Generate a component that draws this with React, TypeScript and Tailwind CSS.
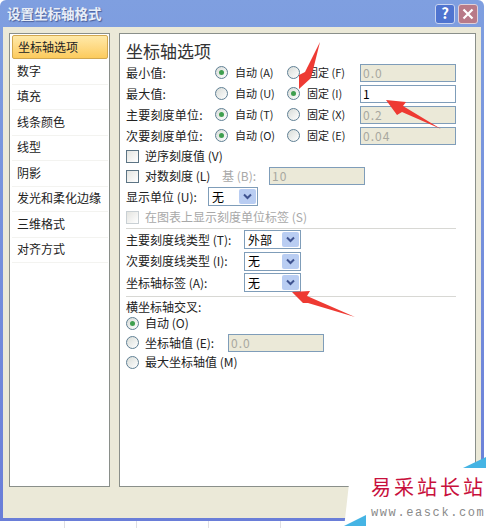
const cjk = "font-['Noto_Sans_CJK_SC','Noto_Sans',sans-serif]";

const navItems = ["数字", "填充", "线条颜色", "线型", "阴影", "发光和柔化边缘", "三维格式", "对齐方式"];

function Radio({ checked }: { checked?: boolean }) {
  return (
    <span className="flex h-[13px] w-[13px] shrink-0 items-center justify-center rounded-full border border-[#5f7f94] bg-gradient-to-br from-[#d8dcd8] to-white">
      {checked && <span className="h-[5px] w-[5px] rounded-full bg-[#3f9f4f]" />}
    </span>
  );
}

function Check({ muted }: { muted?: boolean }) {
  return (
    <span className={`h-[13px] w-[13px] shrink-0 border bg-gradient-to-br from-[#e4e4e0] to-white ${muted ? "border-[#c9d0d4]" : "border-[#5c7484]"}`} />
  );
}

function Field({ value, off, className }: { value: string; off?: boolean; className: string }) {
  return (
    <span
      className={`flex items-center border border-[#7f9db9] pl-[2px] text-[12px] tracking-[1px] ${off ? "bg-[#ebe9d8] text-[#a8a8a0]" : "bg-white text-black"} ${className}`}
    >
      {value}
    </span>
  );
}

function Select({ value, className }: { value: string; className: string }) {
  return (
    <span className={`flex h-[19px] items-center justify-between border border-[#7f9db9] bg-white pl-[3px] pr-[1px] text-[12px] text-black ${className}`}>
      {value}
      <span className="flex h-[15px] w-[17px] items-center justify-center rounded-[2px] bg-[#b9cdf2]">
        <svg width="9" height="7" viewBox="0 0 9 7">
          <path d="M1 1.5 4.5 5 8 1.5" fill="none" stroke="#3f5390" strokeWidth="2" />
        </svg>
      </span>
    </span>
  );
}

function AxisRow({ label, auto, fixed, autoOn, value, off }: { label: string; auto: string; fixed: string; autoOn: boolean; value: string; off: boolean }) {
  return (
    <div className="flex h-[21px] items-center">
      <span className="w-[89px] tracking-[0.2px]">{label}</span>
      <Radio checked={autoOn} />
      <span className="ml-[7px] w-[52px] whitespace-nowrap text-[11px]">{auto}</span>
      <Radio checked={!autoOn} />
      <span className="ml-[7px] w-[53px] whitespace-nowrap text-[11px]">{fixed}</span>
      <Field value={value} off={off} className="h-[18px] w-[96px]" />
    </div>
  );
}

function SelectRow({ label, value }: { label: string; value: string }) {
  return (
    <div className="flex h-[21.5px] items-center">
      <span className="w-[118px] whitespace-nowrap">{label}</span>
      <Select value={value} className="w-[57px]" />
    </div>
  );
}

export default function App() {
  return (
    <div className={`relative h-[528px] w-[486px] overflow-hidden bg-white text-[12px] text-[#222] ${cjk}`}>
      <div className="flex h-[521px] w-[484px] flex-col rounded-t-[6px] bg-gradient-to-b from-[#7f9fe0] to-[#6a7ed8] px-[3px] pb-[3px]">
        {/* 标题栏 */}
        <div className="flex h-[27px] shrink-0 items-center justify-between pl-[4px] pr-[3px]">
          <span className="text-[13.5px] font-bold text-[#e8eef8] [text-shadow:1px_1px_1px_#4a5f9a]">设置坐标轴格式</span>
          <div className="flex gap-[3px]">
            <span className="flex h-[20px] w-[20px] items-center justify-center rounded-[3px] border border-[#c8d4f0] bg-[#4f74d0] text-[15px] font-bold text-white">?</span>
            <span className="flex h-[20px] w-[20px] items-center justify-center rounded-[3px] border border-[#e0d0d8] bg-[#b87a88]">
              <svg width="12" height="12" viewBox="0 0 12 12">
                <path d="M1.5 1.5 10.5 10.5M10.5 1.5 1.5 10.5" stroke="white" strokeWidth="2.2" />
              </svg>
            </span>
          </div>
        </div>

        <div className="flex flex-1 gap-[9px] bg-[#ebe9d8] pb-[31px] pl-[6px] pr-[5px] pt-[6px]">
          {/* 左侧导航 */}
          <div className="w-[101px] shrink-0 border border-[#8a8f8a] bg-white pl-[2px] pr-[1px] pt-[1px]">
            <div className="flex h-[24px] items-center rounded-[2px] border border-[#d2a850] bg-gradient-to-b from-[#ffe9a8] to-[#fccb5c] pl-[5px]">坐标轴选项</div>
            {navItems.map((item) => (
              <div key={item} className="flex h-[25.5px] items-center border-b border-[#f3f3f0] pb-[1px] pl-[5px]">
                {item}
              </div>
            ))}
          </div>

          {/* 右侧面板 */}
          <div className="flex-1 border border-[#8a8f8a] bg-white pl-[6px] pr-[19px]">
            <div className="mt-[5px] h-[23px] text-[17px] leading-[24px] text-[#333]">坐标轴选项</div>
            <AxisRow label="最小值:" auto="自动 (A)" fixed="固定 (F)" autoOn value="0.0" off />
            <AxisRow label="最大值:" auto="自动 (U)" fixed="固定 (I)" autoOn={false} value="1" off={false} />
            <AxisRow label="主要刻度单位:" auto="自动 (T)" fixed="固定 (X)" autoOn value="0.2" off />
            <AxisRow label="次要刻度单位:" auto="自动 (O)" fixed="固定 (E)" autoOn value="0.04" off />

            <div className="flex h-[20px] items-center gap-[6px]">
              <Check />
              <span>逆序刻度值 (V)</span>
            </div>
            <div className="flex h-[20px] items-center gap-[6px]">
              <Check />
              <span className="w-[71px] whitespace-nowrap">对数刻度 (L)</span>
              <span className="w-[41px] whitespace-nowrap text-[#a8a8a8]">基 (B):</span>
              <Field value="10" off className="h-[18px] w-[96px]" />
            </div>
            <div className="flex h-[21px] items-center">
              <span className="w-[82px] whitespace-nowrap">显示单位 (U):</span>
              <Select value="无" className="w-[50px]" />
            </div>
            <div className="flex h-[20px] items-center gap-[6px] text-[#a8a8a8]">
              <Check muted />
              <span>在图表上显示刻度单位标签 (S)</span>
            </div>

            <div className="mt-[1px] h-px bg-[#d8d8d4]" />
            <SelectRow label="主要刻度线类型 (T):" value="外部" />
            <SelectRow label="次要刻度线类型 (I):" value="无" />
            <SelectRow label="坐标轴标签 (A):" value="无" />
            <div className="mt-[2px] h-px bg-[#d8d8d4]" />

            <div className="h-[17px] pt-[1px] leading-[17px]">横坐标轴交叉:</div>
            <div className="flex h-[19px] items-center gap-[6px]">
              <Radio checked />
              <span>自动 (O)</span>
            </div>
            <div className="flex h-[20px] items-center gap-[6px]">
              <Radio />
              <span className="w-[77px] whitespace-nowrap">坐标轴值 (E):</span>
              <Field value="0.0" off className="h-[18px] w-[96px]" />
            </div>
            <div className="flex h-[19px] items-center gap-[6px]">
              <Radio />
              <span>最大坐标轴值 (M)</span>
            </div>
          </div>
        </div>
      </div>

      {/* 对话框下方的浅色刻度 */}
      <div className="flex h-[7px]">
        <span className="w-[65px] border-r border-[#e0e0e4]" />
        <span className="w-[72px] border-r border-[#e0e0e4]" />
        <span className="w-[72px] border-r border-[#e0e0e4]" />
        <span className="w-[72px] border-r border-[#e0e0e4]" />
      </div>

      {/* 标注箭头 */}
      <svg className="absolute left-0 top-0" width="486" height="528" viewBox="0 0 486 528">
        <path d="M320 42 305 72 299 75 299 89 311 78Z" fill="#ee3a33" />
        <path d="M386 100 406 102 403 106 441 129 402 112 397 115Z" fill="#ee3a33" />
        <path d="M292 292 310 291 307 296 355 317 308 303 303 303Z" fill="#ee3a33" />
      </svg>

      {/* 水印 */}
      <div className="absolute left-[344px] top-[466px] h-[62px] w-[142px] bg-white pl-[27px] pt-[8px] [clip-path:polygon(7px_0,100%_0,100%_100%,0_100%)]">
        <div className="text-[20px] leading-[26px] tracking-[3px] text-[#c8103c]">易采站长站</div>
        <div className="mt-[6px] font-['Liberation_Mono',monospace] text-[12px] leading-[14px] tracking-[1.6px] text-[#8a8a8a]">www.easck.com</div>
      </div>
      <div className="absolute left-[344px] top-[515px] h-[11px] w-[22px] bg-[#45b4e4] [clip-path:polygon(100%_0,100%_100%,0_100%)]" />
      <div className="absolute left-[463px] top-[457px] h-[11px] w-[23px] bg-[#45b4e4] [clip-path:polygon(100%_0,100%_100%,0_100%)]" />
    </div>
  );
}
